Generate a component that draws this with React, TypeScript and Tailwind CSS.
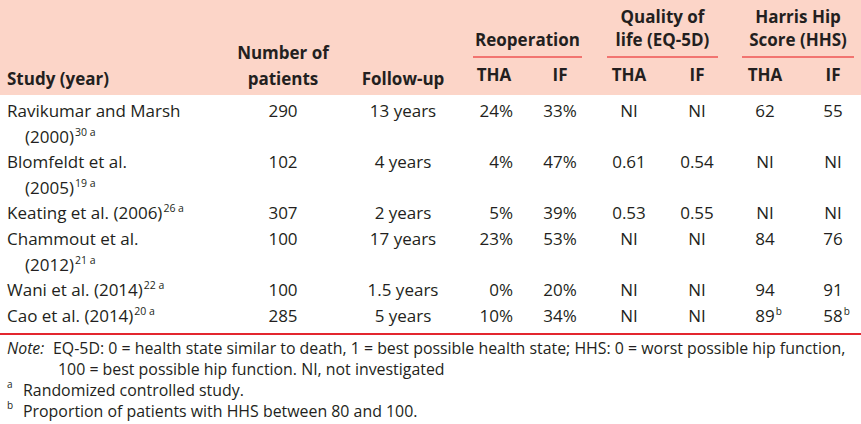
import type { ReactNode } from 'react';

// Outcome table: THA vs internal fixation studies

const cols = 'grid grid-cols-[233px_100px_130px_62px_70px_68px_68px_68px_62px]';

interface Row {
  study: ReactNode[];
  n: string;
  follow: string;
  reTha: string;
  reIf: string;
  qTha: string;
  qIf: string;
  hTha: string;
  hIf: string;
  sup?: boolean;
}

function Sup({ children }: { children: ReactNode }) {
  return <span className="relative -top-[7px] text-[10.5px] leading-none ml-[1px]">{children}</span>;
}

const rows: Row[] = [
  {
    study: ['Ravikumar and Marsh', <>(2000)<Sup>30 a</Sup></>],
    n: '290', follow: '13 years', reTha: '24%', reIf: '33%', qTha: 'NI', qIf: 'NI', hTha: '62', hIf: '55',
  },
  {
    study: ['Blomfeldt et al.', <>(2005)<Sup>19 a</Sup></>],
    n: '102', follow: '4 years', reTha: '4%', reIf: '47%', qTha: '0.61', qIf: '0.54', hTha: 'NI', hIf: 'NI',
  },
  {
    study: [<>Keating et al. (2006)<Sup>26 a</Sup></>],
    n: '307', follow: '2 years', reTha: '5%', reIf: '39%', qTha: '0.53', qIf: '0.55', hTha: 'NI', hIf: 'NI',
  },
  {
    study: ['Chammout et al.', <>(2012)<Sup>21 a</Sup></>],
    n: '100', follow: '17 years', reTha: '23%', reIf: '53%', qTha: 'NI', qIf: 'NI', hTha: '84', hIf: '76',
  },
  {
    study: [<>Wani et al. (2014)<Sup>22 a</Sup></>],
    n: '100', follow: '1.5 years', reTha: '0%', reIf: '20%', qTha: 'NI', qIf: 'NI', hTha: '94', hIf: '91',
  },
  {
    study: [<>Cao et al. (2014)<Sup>20 a</Sup></>],
    n: '285', follow: '5 years', reTha: '10%', reIf: '34%', qTha: 'NI', qIf: 'NI', hTha: '89', hIf: '58', sup: true,
  },
];

function WithB({ v, b }: { v: string; b?: boolean }) {
  return (
    <span className="relative inline-block">
      {v}
      {b && <span className="absolute left-full top-[3px] text-[10px] leading-none ml-[1px]">b</span>}
    </span>
  );
}

export default function App() {
  return (
    <div
      className="w-[861px] h-[424px] bg-white text-[#231f20] overflow-hidden"
      style={{ fontFamily: '"Open Sans", Lato, sans-serif' }}
    >
      {/* header */}
      <div className={`${cols} bg-[#fcd5c8] font-bold text-[17px] h-[95px]`}>
        <div className="row-span-2 self-end pl-[7px] pb-[3px] leading-[26px]">Study (year)</div>
        <div className="row-span-2 self-end text-center pb-[3px] leading-[26px]">
          Number of
          <br />
          patients
        </div>
        <div className="row-span-2 self-end text-center pl-[10px] pb-[3px] leading-[26px]">Follow-up</div>

        <div className="col-span-2 self-end flex flex-col">
          <div className="text-center leading-[23px] pl-[10px] pr-[13px]">Reoperation</div>
          <div className="ml-[10px] mr-[13px] mt-[5px] mb-[4px] h-[2px] bg-[#f27470]" />
        </div>
        <div className="col-span-2 self-end flex flex-col">
          <div className="text-center leading-[23px] pl-[12px] pr-[13px]">
            Quality of
            <br />
            life (EQ-5D)
          </div>
          <div className="ml-[12px] mr-[13px] mt-[5px] mb-[4px] h-[2px] bg-[#f27470]" />
        </div>
        <div className="col-span-2 self-end flex flex-col">
          <div className="text-center leading-[23px] pl-[11px] pr-[7px]">
            Harris Hip
            <br />
            Score (HHS)
          </div>
          <div className="ml-[11px] mr-[7px] mt-[5px] mb-[4px] h-[2px] bg-[#f27470]" />
        </div>

        <div className="col-start-4 text-center leading-[26px] pb-[3px]">THA</div>
        <div className="text-center leading-[26px] pb-[3px]">IF</div>
        <div className="text-center leading-[26px] pb-[3px]">THA</div>
        <div className="text-center leading-[26px] pb-[3px]">IF</div>
        <div className="text-center leading-[26px] pb-[3px]">THA</div>
        <div className="text-center leading-[26px] pb-[3px] pl-[6px]">IF</div>
      </div>

      {/* body */}
      <div className="pt-[3px] pb-[5px] text-[17px] leading-[25.6px]">
        {rows.map((r, i) => (
          <div key={i} className={cols}>
            <div className="pl-[7px]">
              {r.study.map((line, j) => (
                <div key={j} className={j > 0 ? 'pl-[18px]' : ''}>
                  {line}
                </div>
              ))}
            </div>
            <div className="text-center">{r.n}</div>
            <div className="text-center pl-[10px]">{r.follow}</div>
            <div className="text-center">
              <span className="inline-block w-[38px] text-right">{r.reTha}</span>
            </div>
            <div className="text-center">{r.reIf}</div>
            <div className="text-center">{r.qTha}</div>
            <div className="text-center">{r.qIf}</div>
            <div className="text-center">
              <WithB v={r.hTha} b={r.sup} />
            </div>
            <div className="text-center pl-[6px]">
              <WithB v={r.hIf} b={r.sup} />
            </div>
          </div>
        ))}
      </div>
      <div className="h-[2px] bg-[#e3262f]" />

      {/* notes */}
      <div className="pt-[3px] pl-[7px] text-[15.9px] leading-[21px]">
        <div className="flex">
          <span className="italic shrink-0 w-[46px]">Note:</span>
          <div>
            EQ-5D: 0 = health state similar to death, 1 = best possible health state; HHS: 0 = worst possible hip
            function,
            <br />
            <span className="pl-[5px]">100 = best possible hip function. NI, not investigated</span>
          </div>
        </div>
        <div className="flex">
          <span className="w-[16px] shrink-0 relative -top-[6px] text-[10px]">a</span>
          <span>Randomized controlled study.</span>
        </div>
        <div className="flex">
          <span className="w-[16px] shrink-0 relative -top-[6px] text-[10px]">b</span>
          <span>Proportion of patients with HHS between 80 and 100.</span>
        </div>
      </div>
    </div>
  );
}
